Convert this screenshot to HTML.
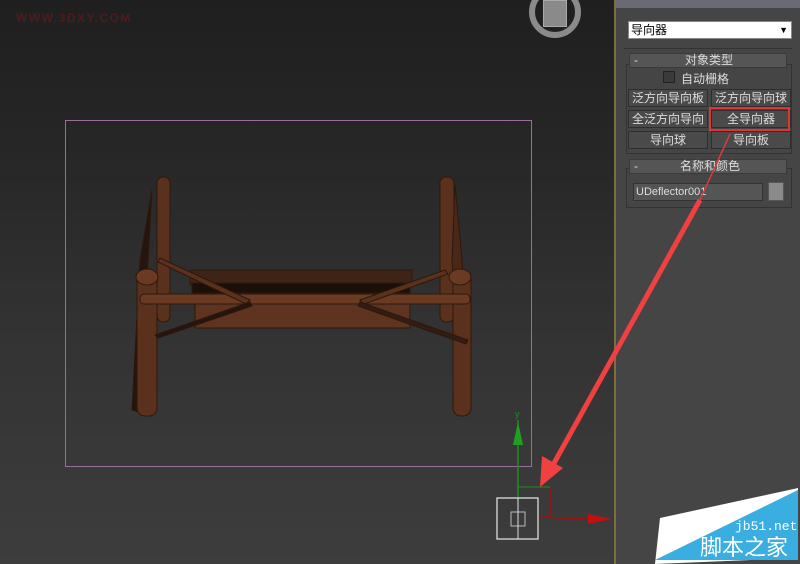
<!DOCTYPE html>
<html><head><meta charset="utf-8"><style>
*{margin:0;padding:0;box-sizing:border-box}
body{width:800px;height:564px;overflow:hidden;position:relative;font-family:"Liberation Sans","Noto Sans CJK SC",sans-serif;background:#2e2e2e}
#vp{position:absolute;left:0;top:0;width:614px;height:564px;background:linear-gradient(#1f1f1f 0%,#262626 25%,#333 60%,#3d3d3d 100%)}
#panel{position:absolute;left:614px;top:0;width:186px;height:564px;background:#454545;border-left:2px solid #7d6f3c}
.t{position:absolute;color:#ddd;font-size:12px;white-space:nowrap}
.btn{position:absolute;height:18px;background:#4a4a4a;border:1px solid #2e2e2e;color:#ddd;font-size:12px;text-align:center;line-height:16px}
.hdr{position:absolute;height:15px;background:#555;border:1px solid #3a3a3a;color:#ddd;font-size:12px;line-height:13px}
</style></head><body>
<div id="vp">
<div class="t" style="left:16px;top:11px;color:#4e1c1c;font-size:12px;letter-spacing:1.5px;font-weight:bold">WWW.3DXY.COM</div>
<div style="position:absolute;left:529px;top:-14px;width:52px;height:52px;border-radius:50%;border:6px solid #8a8a8a"></div>
<div style="position:absolute;left:543px;top:0;width:24px;height:27px;background:#8a8a8a;border:1px solid #aaa"></div>
<div style="position:absolute;left:65px;top:120px;width:467px;height:347px;border:1px solid #9a6e9a"></div>
<svg width="614" height="564" style="position:absolute;left:0;top:0">
<g fill="#5a311d" stroke="#2e180c" stroke-width="1">
<rect x="157" y="177" width="13" height="145" rx="6"/>
<rect x="440" y="177" width="14" height="145" rx="6"/>
<path d="M152 190 L140 260 L132 410 L138 412 L148 260 Z" fill="#24150e"/>
<path d="M455 185 L462 260 L468 410 L462 410 L452 260Z" fill="#4a2818"/>
<rect x="190" y="270" width="222" height="15" fill="#3e2416"/>
<rect x="192" y="283" width="218" height="10" fill="#1a100a"/>
<rect x="195" y="303" width="215" height="25" fill="#5e3320"/>
<rect x="137" y="272" width="20" height="144" rx="8"/>
<rect x="453" y="272" width="18" height="144" rx="8"/>
<ellipse cx="147" cy="277" rx="11" ry="8" fill="#6a3a22"/>
<ellipse cx="460" cy="277" rx="11" ry="8" fill="#6a3a22"/>
<rect x="140" y="294" width="330" height="10" rx="4" fill="#6a3a22"/>
<path d="M160 258 L250 300 L246 304 L158 262Z"/>
<path d="M445 270 L360 300 L364 304 L448 274Z"/>
<path d="M155 335 L250 302 L252 306 L158 338Z" fill="#24150e"/>
<path d="M360 302 L468 340 L466 344 L358 306Z" fill="#321d12"/>
</g>
<line x1="518" y1="420" x2="518" y2="500" stroke="#1d8f1d" stroke-width="1.5"/>
<polygon points="518,422 513,445 523,445" fill="#1fa01f"/>
<text x="515" y="417" fill="#1d8f1d" font-size="9" font-family="Liberation Sans">y</text>
<line x1="518" y1="487" x2="550" y2="487" stroke="#1d8f1d"/>
<polyline points="550,488 550,517 540,517 588,519" fill="none" stroke="#a01010" stroke-width="1.5"/>
<polygon points="588,514 612,519 588,524" fill="#c01010"/>
<rect x="497" y="498" width="41" height="41" fill="none" stroke="#ddd" stroke-width="1.3"/>
<rect x="511" y="512" width="14" height="14" fill="none" stroke="#bbb"/>
<line x1="518" y1="498" x2="518" y2="539" stroke="#ddd"/>
</svg>
</div>
<div id="panel">
<div style="position:absolute;left:0;top:0;width:186px;height:8px;background:#6a6a76"></div>
<div style="position:absolute;left:12px;top:21px;width:164px;height:18px;background:#fff;border:1px solid #888;color:#000;font-size:12px;line-height:16px;padding-left:2px">导向器<span style="position:absolute;right:3px;font-size:9px">▼</span></div>
<div style="position:absolute;left:8px;top:48px;width:168px;height:1px;background:#333"></div>
<div style="position:absolute;left:10px;top:64px;width:166px;height:90px;border:1px solid #333"></div>
<div class="hdr" style="left:13px;top:53px;width:158px"><span style="margin-left:4px">-</span><span style="position:absolute;left:55px">对象类型</span></div>
<div style="position:absolute;left:47px;top:71px;width:12px;height:12px;border:1px solid #222;background:#3a3a3a"></div>
<div class="t" style="left:65px;top:70px">自动栅格</div>
<div class="btn" style="left:12px;top:89px;width:80px">泛方向导向板</div>
<div class="btn" style="left:95px;top:89px;width:80px">泛方向导向球</div>
<div class="btn" style="left:12px;top:110px;width:80px">全泛方向导向</div>
<div class="btn" style="left:95px;top:110px;width:80px">全导向器</div>
<div style="position:absolute;left:93px;top:107px;width:81px;height:24px;border:2px solid #e03535"></div>
<div class="btn" style="left:12px;top:131px;width:80px">导向球</div>
<div class="btn" style="left:95px;top:131px;width:80px">导向板</div>
<div style="position:absolute;left:10px;top:168px;width:166px;height:40px;border:1px solid #333"></div>
<div class="hdr" style="left:13px;top:159px;width:158px"><span style="margin-left:4px">-</span><span style="position:absolute;left:50px">名称和颜色</span></div>
<div style="position:absolute;left:17px;top:183px;width:130px;height:18px;background:#555;border:1px solid #333;color:#ddd;font-size:11px;line-height:16px;padding-left:2px">UDeflector001</div>
<div style="position:absolute;left:152px;top:182px;width:16px;height:19px;background:#8a8a8a;border:1px solid #555"></div>
</div>
<svg width="800" height="564" style="position:absolute;left:0;top:0">
<line x1="730" y1="134" x2="700" y2="200" stroke="#e03a3a" stroke-width="1.5"/>
<line x1="700" y1="200" x2="553" y2="465" stroke="#f04040" stroke-width="5"/>
<polygon points="540,487 542,456 563,468" fill="#f04040"/>
<polygon points="655,564 660,518 798,488 798,558" fill="#fff"/>
<polygon points="655,560 798,490 798,560" fill="#3aaee0"/>
<text x="735" y="530" fill="#fff" font-size="13" font-family="Liberation Mono">jb51.net</text>
<text x="700" y="555" fill="#fff" font-size="22" font-family="Noto Sans CJK SC">脚本之家</text>
</svg>
</body></html>
